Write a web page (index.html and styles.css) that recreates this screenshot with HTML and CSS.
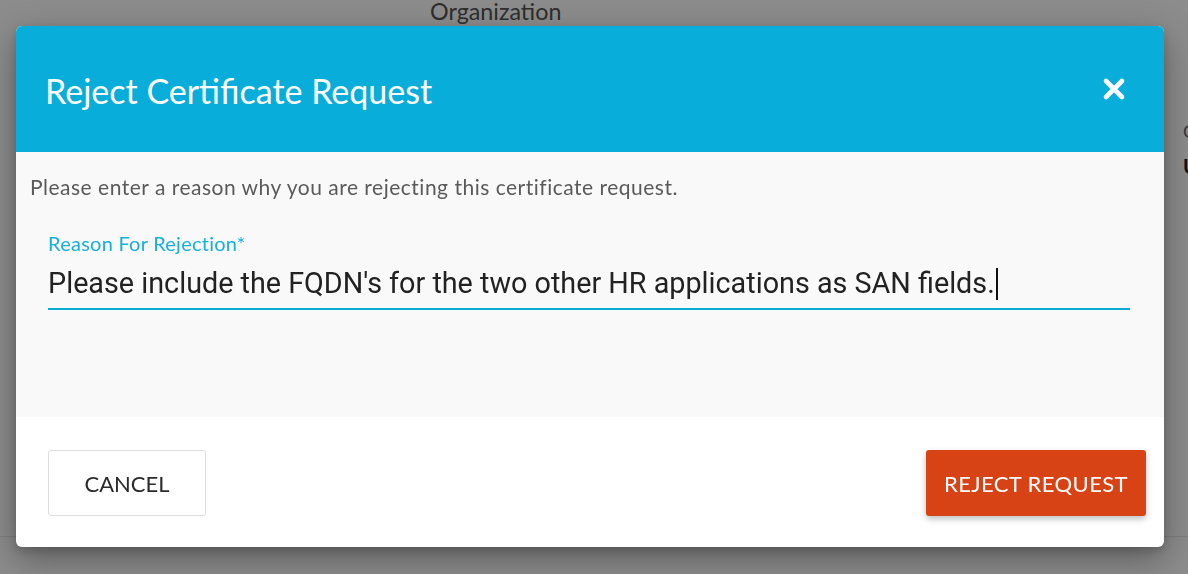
FILE: index.html
```html
<!DOCTYPE html>
<html lang="en">
<head>
<meta charset="utf-8">
<title>Reject Certificate Request</title>
<link rel="stylesheet" href="styles.css">
</head>
<body>
  <div class="page">
    <div class="page-top">
      <span class="page-heading">Organization</span>
    </div>
    <div class="page-side">
      <div class="side-label">Organizational Unit</div>
      <div class="side-value">Unit</div>
    </div>
    <div class="page-rule"></div>
  </div>

  <div class="overlay"></div>

  <div class="dialog" role="dialog">
    <div class="dialog-header">
      <h1 class="dialog-title">Reject Certificate Request</h1>
      <button class="close-btn" aria-label="Close">
        <svg width="24" height="24" viewBox="0 0 24 24"><path d="M4 4 L20 20 M20 4 L4 20" stroke="#fff" stroke-width="4.6" stroke-linecap="round"/></svg>
      </button>
    </div>
    <div class="dialog-body">
      <p class="dialog-desc">Please enter a reason why you are rejecting this certificate request.</p>
      <div class="field">
        <label class="field-label">Reason For Rejection*</label>
        <div class="field-input">Please include the FQDN's for the two other HR applications as SAN fields.<span class="caret"></span></div>
      </div>
    </div>
    <div class="dialog-footer">
      <button class="btn btn-cancel">CANCEL</button>
      <button class="btn btn-reject">REJECT REQUEST</button>
    </div>
  </div>
</body>
</html>
```

FILE: styles.css
```css
html, body {
  margin: 0;
  padding: 0;
  height: 100%;
}

body {
  background: #ffffff;
  font-family: "Lato", "Open Sans", sans-serif;
  overflow: hidden;
}

.page {
  position: relative;
  height: 574px;
}

.page-top {
  padding-left: 430px;
  padding-top: 0;
}

.page-heading {
  display: inline-block;
  font-size: 23.3px;
  color: #555;
  line-height: 24px;
  margin-top: -1px;
}

.page-side {
  position: absolute;
  left: 1183px;
  top: 118px;
  white-space: nowrap;
}

.side-label {
  font-size: 18px;
  color: #666;
  line-height: 26px;
}

.side-value {
  font-size: 20px;
  font-weight: 700;
  color: #222;
  margin-top: 10px;
}

.page-rule {
  position: absolute;
  left: 0;
  right: 0;
  top: 536px;
  height: 1px;
  background: #e6e6e6;
}

.overlay {
  position: fixed;
  inset: 0;
  background: rgba(0, 0, 0, 0.45);
}

.dialog {
  position: absolute;
  left: 16px;
  top: 26px;
  width: 1148px;
  height: 521px;
  border-radius: 6px;
  overflow: hidden;
  display: flex;
  flex-direction: column;
  background: #ffffff;
  box-shadow: 0 12px 34px rgba(0, 0, 0, 0.35), 0 4px 10px rgba(0, 0, 0, 0.15);
}

.dialog-header {
  height: 126px;
  flex: none;
  background: #08aed9;
  display: flex;
  align-items: center;
  justify-content: space-between;
  padding: 0 38px 0 29px;
}

.dialog-title {
  margin: 0;
  font-weight: 400;
  font-size: 34px;
  color: #ffffff;
  letter-spacing: 0;
  padding-top: 2px;
}

.close-btn {
  background: none;
  border: 0;
  padding: 0;
  width: 24px;
  height: 24px;
  display: flex;
  cursor: pointer;
}

.dialog-body {
  height: 265px;
  flex: none;
  background: #f9f9f9;
  padding: 0 34px 0 14px;
  box-sizing: border-box;
}

.dialog-desc {
  margin: 22px 0 0 0;
  font-size: 21px;
  letter-spacing: 0.5px;
  line-height: 26px;
  color: #5a5a5a;
}

.field {
  margin: 33px 0 0 18px;
}

.field-label {
  display: block;
  font-size: 20px;
  letter-spacing: 0.25px;
  line-height: 20px;
  color: #17b0da;
}

.field-input {
  font-family: "Roboto", "Liberation Sans", sans-serif;
  font-size: 28.75px;
  line-height: 36px;
  color: #222;
  padding: 12px 0 7px 0;
  border-bottom: 2px solid #09acd8;
  white-space: nowrap;
}

.caret {
  display: inline-block;
  width: 2px;
  height: 32px;
  background: #111;
  vertical-align: -7px;
  margin-left: 1px;
}

.dialog-footer {
  flex: 1;
  display: flex;
  justify-content: space-between;
  align-items: flex-start;
  padding: 33px 18px 0 32px;
}

.btn {
  height: 66px;
  font-family: "Lato", "Open Sans", sans-serif;
  font-size: 22px;
  border-radius: 3px;
  cursor: pointer;
}

.btn-cancel {
  width: 158px;
  background: #ffffff;
  border: 1px solid #dedede;
  color: #2a2a2a;
}

.btn-reject {
  width: 220px;
  background: #d84315;
  border: 0;
  color: #ffffff;
  letter-spacing: 0.4px;
  box-shadow: 0 3px 6px rgba(0, 0, 0, 0.25);
}
```
